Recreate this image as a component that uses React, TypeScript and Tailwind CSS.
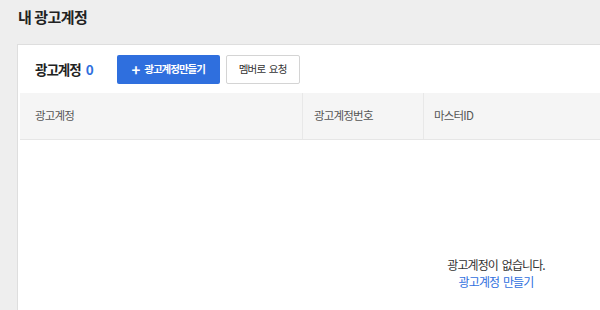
import React from "react";

const font = { fontFamily: '"Noto Sans CJK KR", "Noto Sans", sans-serif' };

function AccountHeader() {
  return (
    <div className="flex h-[48px] items-center pl-[17px] pr-4">
      <h2 className="flex items-center text-[13.5px] font-bold tracking-[-1px] text-[#222]">
        광고계정
        <span className="ml-[5px] text-[#2f6fde]">0</span>
      </h2>
      <button className="ml-[24px] flex h-[29px] w-[103px] items-center justify-center gap-[5px] rounded-[2px] bg-[#2f6fde] text-[10.5px] font-bold tracking-[-1px] text-white">
        <span className="text-[15px] font-bold leading-none">+</span>
        광고계정만들기
      </button>
      <button className="ml-[6px] flex h-[29px] w-[74px] items-center justify-center rounded-[2px] border border-[#d4d4d4] bg-white text-[10.5px] tracking-[-0.8px] text-[#333] [word-spacing:2px]">
        멤버로 요청
      </button>
    </div>
  );
}

function AccountTable() {
  return (
    <div className="px-[2px]">
      <div className="flex h-[47px] items-center border-b border-[#e6e6e6] bg-[#f5f5f5] text-[11.5px] tracking-[-0.8px] text-[#555]">
        <div className="flex h-full w-[283px] items-center border-r border-[#e8e8e8] pl-[15px]">광고계정</div>
        <div className="flex h-full w-[121px] items-center border-r border-[#e8e8e8] pl-[11px]">광고계정번호</div>
        <div className="flex h-full flex-1 items-center pl-[10px]">마스터ID</div>
      </div>
      <div className="flex flex-col items-center pt-[116px] text-[12px] leading-[17px] tracking-[-0.9px] [word-spacing:2px]">
        <p className="text-[#333]">광고계정이 없습니다.</p>
        <a className="text-[#2f6fde]">광고계정 만들기</a>
      </div>
    </div>
  );
}

export default function App() {
  return (
    <div className="h-[310px] w-[600px] overflow-hidden bg-[#eeeeee]" style={font}>
      <h1 className="pl-[18px] pt-[6px] text-[15px] font-bold leading-[22px] tracking-[-0.5px] text-[#222]">
        내 광고계정
      </h1>
      <div className="ml-[17px] mt-[16px] h-[400px] w-[958px] border border-[#dedede] bg-white">
        <AccountHeader />
        <AccountTable />
      </div>
    </div>
  );
}
